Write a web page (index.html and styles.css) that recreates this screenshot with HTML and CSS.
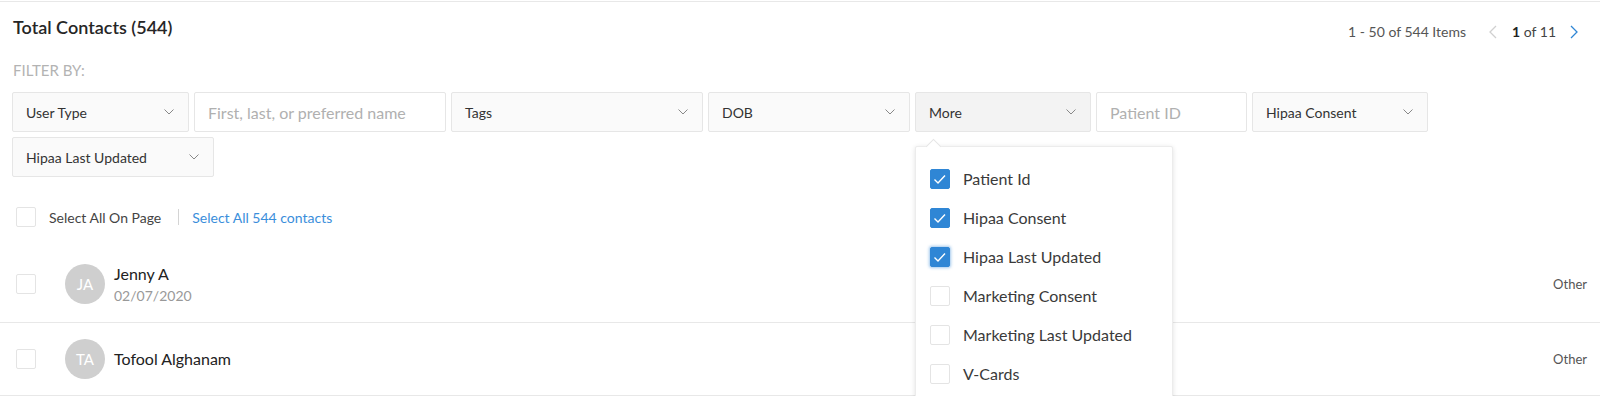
FILE: index.html
```html
<!DOCTYPE html>
<html lang="en">
<head>
    <meta charset="UTF-8">
    <title>Contacts</title>
    <link rel="stylesheet" href="styles.css">
</head>
<body>
<div class="page">

    <div class="header">
        <h1 class="title">Total Contacts (544)</h1>
        <div class="pager">
            <span class="pager-count">1 - 50 of 544 Items</span>
            <svg class="pager-arrow prev" width="8" height="14" viewBox="0 0 8 14"><polyline points="7,1 1,7 7,13" /></svg>
            <span class="pager-pages"><b>1</b> of 11</span>
            <svg class="pager-arrow next" width="8" height="14" viewBox="0 0 8 14"><polyline points="1,1 7,7 1,13" /></svg>
        </div>
    </div>

    <div class="filter-label">FILTER BY:</div>

    <div class="filters">
        <div class="filter f-user"><span>User Type</span><svg class="chev" width="10" height="6" viewBox="0 0 10 6"><polyline points="0.5,0.5 5,5 9.5,0.5" /></svg></div>
        <input class="filter filter-input f-name" type="text" placeholder="First, last, or preferred name">
        <div class="filter f-tags"><span>Tags</span><svg class="chev" width="10" height="6" viewBox="0 0 10 6"><polyline points="0.5,0.5 5,5 9.5,0.5" /></svg></div>
        <div class="filter f-dob"><span>DOB</span><svg class="chev" width="10" height="6" viewBox="0 0 10 6"><polyline points="0.5,0.5 5,5 9.5,0.5" /></svg></div>
        <div class="filter f-more open">
            <span>More</span><svg class="chev" width="10" height="6" viewBox="0 0 10 6"><polyline points="0.5,0.5 5,5 9.5,0.5" /></svg>
            <div class="menu">
                <div class="menu-item"><span class="check on"><svg width="18" height="18" viewBox="0 0 18 18"><polyline points="3.5,9.5 7,13 14,5.5" /></svg></span>Patient Id</div>
                <div class="menu-item"><span class="check on"><svg width="18" height="18" viewBox="0 0 18 18"><polyline points="3.5,9.5 7,13 14,5.5" /></svg></span>Hipaa Consent</div>
                <div class="menu-item"><span class="check on focus"><svg width="18" height="18" viewBox="0 0 18 18"><polyline points="3.5,9.5 7,13 14,5.5" /></svg></span>Hipaa Last Updated</div>
                <div class="menu-item"><span class="check"></span>Marketing Consent</div>
                <div class="menu-item"><span class="check"></span>Marketing Last Updated</div>
                <div class="menu-item"><span class="check"></span>V-Cards</div>
            </div>
        </div>
        <input class="filter filter-input f-pid" type="text" placeholder="Patient ID">
        <div class="filter f-hipaa"><span>Hipaa Consent</span><svg class="chev" width="10" height="6" viewBox="0 0 10 6"><polyline points="0.5,0.5 5,5 9.5,0.5" /></svg></div>
        <div class="filter f-hipaa-upd"><span>Hipaa Last Updated</span><svg class="chev" width="10" height="6" viewBox="0 0 10 6"><polyline points="0.5,0.5 5,5 9.5,0.5" /></svg></div>
    </div>

    <div class="select-all">
        <span class="check"></span>
        <span class="select-all-text">Select All On Page</span>
        <span class="divider"></span>
        <a class="select-all-link" href="#">Select All 544 contacts</a>
    </div>

    <div class="contacts">
        <div class="contact">
            <span class="check"></span>
            <div class="avatar">JA</div>
            <div class="contact-info">
                <div class="contact-name">Jenny A</div>
                <div class="contact-date">02/07/2020</div>
            </div>
            <div class="contact-type">Other</div>
        </div>
        <div class="contact">
            <span class="check"></span>
            <div class="avatar">TA</div>
            <div class="contact-info">
                <div class="contact-name">Tofool Alghanam</div>
            </div>
            <div class="contact-type">Other</div>
        </div>
    </div>

</div>
</body>
</html>
```

FILE: styles.css
```css
body {
    margin: 0;
    font-family: 'Lato', 'Liberation Sans', sans-serif;
    color: #333;
    background: #fff;
}

.page {
    margin-top: 1px;
    border-top: 1px solid #e8e8e8;
}

.header {
    display: flex;
    justify-content: space-between;
    align-items: flex-start;
    padding: 14px 22px 0 13px;
}

.title {
    margin: 0;
    font-size: 18px;
    line-height: 22px;
    font-weight: 600;
    color: #262626;
}

.pager {
    display: flex;
    align-items: center;
    margin-top: 8px;
    font-size: 14px;
    line-height: 16px;
    color: #555;
}

.pager-count {
    margin-right: 23px;
}

.pager-pages {
    margin: 0 14px 0 15px;
    color: #444;
}

.pager-pages b {
    color: #222;
}

.pager-arrow polyline {
    fill: none;
    stroke-width: 1.3;
}

.pager-arrow.prev polyline {
    stroke: #d0d0d0;
}

.pager-arrow.next polyline {
    stroke: #2f86d5;
}

.filter-label {
    margin: 21px 0 0 13px;
    font-size: 15px;
    line-height: 18px;
    color: #b3b3b3;
}

.filters {
    display: flex;
    flex-wrap: wrap;
    gap: 5px;
    margin-top: 13px;
    padding: 0 13px 0 12px;
}

.filter {
    position: relative;
    box-sizing: border-box;
    height: 40px;
    display: flex;
    align-items: center;
    justify-content: space-between;
    padding: 0 14px 0 13px;
    border: 1px solid #e6e6e6;
    border-radius: 2px;
    background: #fafafa;
    font-family: inherit;
    font-size: 14px;
    color: #333;
}

.filter.open {
    background: #f3f3f3;
}

.filter-input {
    background: #fff;
    font-size: 16px;
    outline: none;
}

.filter-input::placeholder {
    color: #b0b0b0;
}

.chev polyline {
    fill: none;
    stroke: #888;
    stroke-width: 1;
}

.f-user { width: 177px; }
.f-name { width: 252px; }
.f-tags { width: 252px; }
.f-dob { width: 202px; }
.f-more { width: 176px; }
.f-pid { width: 151px; }
.f-hipaa { width: 176px; }
.f-hipaa-upd { width: 202px; }

.menu {
    position: absolute;
    top: 53px;
    left: -1px;
    z-index: 5;
    box-sizing: border-box;
    width: 258px;
    padding: 12px 0 6px;
    background: #fff;
    border: 1px solid #ececec;
    border-radius: 2px;
    box-shadow: 0 1px 5px rgba(0, 0, 0, 0.12);
}

.menu::before {
    content: "";
    position: absolute;
    top: -6px;
    left: 12px;
    width: 10px;
    height: 10px;
    background: #fff;
    border-left: 1px solid #e6e6e6;
    border-top: 1px solid #e6e6e6;
    transform: rotate(45deg);
}

.menu-item {
    display: flex;
    align-items: center;
    gap: 13px;
    height: 39px;
    padding-left: 14px;
    font-size: 16px;
    color: #3a3a3a;
}

.check {
    display: inline-flex;
    align-items: center;
    justify-content: center;
    flex-shrink: 0;
    box-sizing: border-box;
    width: 20px;
    height: 20px;
    border: 1px solid #e4e4e4;
    border-radius: 2px;
    background: #fff;
}

.check.on {
    background: #2f86d5;
    border-color: #2f86d5;
}

.check.focus {
    box-shadow: 0 0 3px 1px rgba(47, 134, 213, 0.45);
}

.check polyline {
    fill: none;
    stroke: #fff;
    stroke-width: 1.4;
}

.select-all {
    display: flex;
    align-items: center;
    height: 20px;
    margin: 30px 0 19px;
    padding-left: 16px;
    font-size: 14px;
}

.select-all-text {
    margin-left: 13px;
    color: #444;
}

.divider {
    width: 1px;
    height: 16px;
    margin: 0 13px 0 17px;
    background: #d4d4d4;
}

.select-all-link {
    color: #3a8edb;
    text-decoration: none;
}

.contact {
    display: flex;
    align-items: center;
    padding: 16px 13px 16px 16px;
    border-bottom: 1px solid #e8e8e8;
}

.avatar {
    display: flex;
    align-items: center;
    justify-content: center;
    width: 40px;
    height: 40px;
    margin-left: 29px;
    border-radius: 50%;
    background: #cfcfcf;
    color: #fff;
    font-size: 15px;
}

.contact-info {
    margin-left: 9px;
}

.contact-name {
    font-size: 16px;
    line-height: 24px;
    color: #222;
}

.contact-date {
    font-size: 14px;
    line-height: 20px;
    color: #999;
}

.contact-type {
    margin-left: auto;
    font-size: 13px;
    color: #555;
}
```
